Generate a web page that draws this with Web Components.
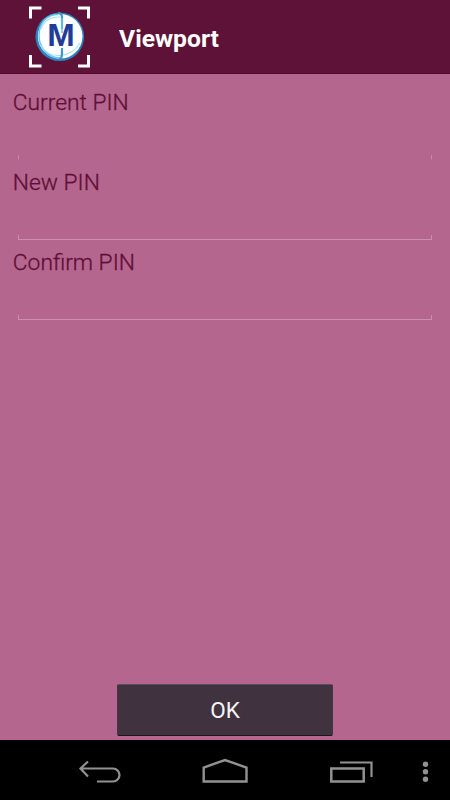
<!DOCTYPE html>
<html lang="en"><head><meta charset="utf-8"><title>Viewport</title>
<style>html,body{margin:0;height:100%;overflow:hidden;background:#b5668f}</style></head>
<body>
<pin-screen></pin-screen>
<script>
function define(name, html){
  customElements.define(name, class extends HTMLElement{
    constructor(){super();this.attachShadow({mode:'open'}).innerHTML=html;}
  });
}
define('app-logo',`<style>:host{display:block;width:62px;height:62px}svg{display:block}text{font:bold 31px "Liberation Sans",Arial,sans-serif}</style>
<svg width="62" height="62" viewBox="29 6 62 62">
<g fill="none" stroke="#fff" stroke-width="3"><path d="M30.500 18.500V8H41.500M78 8H88.500V18.500M30.500 55V66H41.500M78 66H88.500V55"/></g>
<circle cx="59.800" cy="36.800" r="24.300" fill="#2d82bf"/>
<circle cx="60.200" cy="36.300" r="22.300" fill="#fff"/>
<path d="M58 14.500C47 14.500 39.500 22 39 35C39 48 48 57.500 60 58" fill="none" stroke="#6cc8ec" stroke-width="1.500"/>
<path d="M41 29C44 21 51 16.500 60 17M40 45Q48 56.500 60 55.500Q74 54 80 43" fill="none" stroke="#a5dff4" stroke-width="1.100"/>
<path d="M58 13Q62 13.500 62 17V29M62 48V54Q62 58 59.500 59" fill="none" stroke="#3a9acb" stroke-width="2.200"/>
<path d="M62 18V33" stroke="#67c4ed" stroke-width="1.500"/>
<text x="47.300" y="46.400" textLength="27.500" lengthAdjust="spacingAndGlyphs" fill="#213b98">M</text>
</svg>`);
define('app-header',`<style>:host{display:flex;align-items:center;box-sizing:border-box;height:74px;padding:0 0 0 29px;gap:28px;background:#5e1237;border-bottom:1px solid #4e0d2d;color:#fff;font:bold 24.700px/32px Roboto,sans-serif}
h1{font:inherit;margin:4px 0 0}</style><slot name="icon"></slot><h1><slot></slot></h1>`);
define('pin-field',`<style>:host{display:flex;flex-direction:column;height:80px;color:#5e0f35}
label{font:300 22.800px/28px Roboto,sans-serif;-webkit-text-stroke:.3px #5e0f35;padding:1px 0 0 12.800px;display:block}
.line{height:4px;margin:auto 18px 8px;border:1px solid #cb8eaf;border-top:0;}
:host([plain]) .line{border-bottom-color:transparent;border-left-color:#c788aa;border-right-color:#c788aa}</style>
<label><slot></slot></label><div class="line"></div>`);
define('push-button',`<style>:host{display:block}button{display:block;width:216px;height:52px;box-sizing:border-box;padding:0;border:1px solid #443744;border-top-color:#5d4d5c;border-bottom:1px solid #14191d;border-radius:2px;background:#40333f;color:#f5f5f5;font:22.500px/50px Roboto,sans-serif}</style><button><slot></slot></button>`);
define('system-bar',`<style>:host{display:block;height:60px;background:#000}svg{display:block}</style>
<svg width="450" height="60" viewBox="0 740 450 60" fill="none" stroke="#929292" stroke-width="2.200">
<path d="M81 768.500H113A6.500 6.500 0 0 1 113 781.500H97M88 761.500L80.500 768.500L88 776.500"/>
<path d="M203.700 781.500V767.500L225 760L246.500 767.500V781.500Z" stroke-width="2.400"/>
<path d="M331.300 768.500H363.700V781.500H331.300Z" stroke-width="2.500"/><path d="M340 762.500H371.500V777"/>
<g fill="#929292" stroke="none"><circle cx="425.500" cy="764.300" r="2.700"/><circle cx="425.500" cy="771.800" r="2.700"/><circle cx="425.500" cy="779.300" r="2.700"/></g></svg>`);
define('pin-screen',`<style>:host{display:flex;flex-direction:column;width:450px;height:800px;background:#b5668f}
main{flex:1;display:flex;flex-direction:column;padding:14px 0 4px}
push-button{margin:auto auto 0}</style>
<app-header><app-logo slot="icon"></app-logo>Viewport</app-header>
<main><pin-field plain>Current PIN</pin-field><pin-field>New PIN</pin-field><pin-field>Confirm PIN</pin-field><push-button>OK</push-button></main>
<system-bar></system-bar>`);
</script></body></html>
